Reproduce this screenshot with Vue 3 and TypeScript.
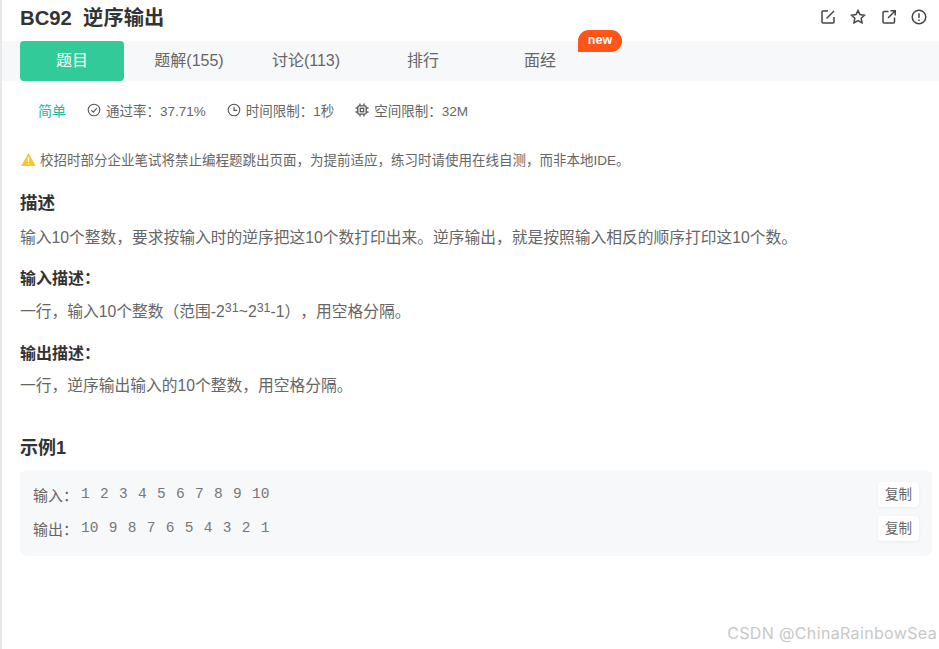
<script setup lang="ts">
const tabs = [
  { label: '题目', active: true },
  { label: '题解(155)', active: false },
  { label: '讨论(113)', active: false },
  { label: '排行', active: false },
  { label: '面经', active: false, badge: 'new' },
]
const samples = [
  { label: '输入\uFF1A', value: '1 2 3 4 5 6 7 8 9 10' },
  { label: '输出\uFF1A', value: '10 9 8 7 6 5 4 3 2 1' },
]
</script>

<template>
  <div class="page">
    <header class="head">
      <h1 class="title">BC92&nbsp;&nbsp;逆序输出</h1>
      <div class="actions">
        <svg viewBox="0 0 16 16" class="act"><path d="M8 2H3a1 1 0 0 0-1 1v10a1 1 0 0 0 1 1h10a1 1 0 0 0 1-1V8" /><path d="M6.500 9.500 14 2" /></svg>
        <svg viewBox="0 0 16 16" class="act"><path d="M8 1.500 9.900 5.600l4.600.6-3.300 3.100.8 4.500L8 11.600l-4 2.200.8-4.500L1.500 6.200l4.600-.6Z" /></svg>
        <svg viewBox="0 0 16 16" class="act"><path d="M7.500 2.500H3a1 1 0 0 0-1 1V13a1 1 0 0 0 1 1h9.500a1 1 0 0 0 1-1V8.500" /><path d="M7 9 14 2M9.500 1.800h4.700v4.700" /></svg>
        <svg viewBox="0 0 16 16" class="act"><circle cx="8" cy="8" r="6.800" /><path d="M8 4.200v4.800M8 10.600v1.300" /></svg>
      </div>
    </header>

    <nav class="tabs">
      <div v-for="t in tabs" :key="t.label" class="tab" :class="{ active: t.active }">
        {{ t.label }}
        <span v-if="t.badge" class="badge">{{ t.badge }}</span>
      </div>
    </nav>

    <div class="meta">
      <span class="level">简单</span>
      <span class="item">
        <svg viewBox="0 0 14 14" class="mi"><circle cx="7" cy="7" r="5.800" /><path d="M4.300 7.200 6.300 9.200 9.900 5.200" /></svg>
        通过率&#xFF1A;37.71%
      </span>
      <span class="item">
        <svg viewBox="0 0 14 14" class="mi"><circle cx="7" cy="7" r="5.800" /><path d="M7 3.800V7.400H10.200" /></svg>
        时间限制&#xFF1A;1秒
      </span>
      <span class="item">
        <svg viewBox="0 0 14 14" class="mi chip"><rect x="2.800" y="2.800" width="8.400" height="8.400" rx="1.500" /><rect x="5.300" y="5.300" width="3.400" height="3.400" /><path d="M5 .5v2.300M9 .5v2.300M5 11.200v2.300M9 11.200v2.300M.5 5h2.300M.5 9h2.300M11.200 5h2.300M11.200 9h2.300" /></svg>
        空间限制&#xFF1A;32M
      </span>
    </div>

    <p class="warn">
      <svg viewBox="0 0 14 14" class="warn-icon"><path d="M7 1 13.800 13H.2Z" fill="#f7c531" /><path d="M7 5v4.300M7 10.300v1.200" stroke="#fff" stroke-width="1.400" /></svg>
      校招时部分企业笔试将禁止编程题跳出页面&#xFF0C;为提前适应&#xFF0C;练习时请使用在线自测&#xFF0C;而非本地IDE。
    </p>

    <h2 class="h-main">描述</h2>
    <p class="body">输入10个整数&#xFF0C;要求按输入时的逆序把这10个数打印出来。逆序输出&#xFF0C;就是按照输入相反的顺序打印这10个数。</p>

    <h3 class="h-sub first">输入描述&#xFF1A;</h3>
    <p class="body">一行&#xFF0C;输入10个整数&#xFF08;范围-2<sup>31</sup>~2<sup>31</sup>-1&#xFF09;&#xFF0C;用空格分隔。</p>

    <h3 class="h-sub second">输出描述&#xFF1A;</h3>
    <p class="body last">一行&#xFF0C;逆序输出输入的10个整数&#xFF0C;用空格分隔。</p>

    <h2 class="h-example">示例1</h2>
    <section class="sample">
      <div v-for="s in samples" :key="s.label" class="row">
        <span class="label">{{ s.label }}</span>
        <code class="value">{{ s.value }}</code>
        <button class="copy">复制</button>
      </div>
    </section>

    <div class="mark">CSDN @ChinaRainbowSea</div>
  </div>
</template>

<style>
html, body { margin: 0; background: #fff; overflow: hidden; }
</style>

<style scoped>
.page {
  position: relative;
  box-sizing: border-box;
  width: 939px;
  height: 649px;
  overflow: hidden;
  border-left: 2px solid #e8e8e8;
  color: #666;
  font-family: "Liberation Sans", "Noto Sans CJK SC", sans-serif;
  font-size: 14px;
}
.head {
  display: flex;
  align-items: center;
  justify-content: space-between;
  height: 41px;
  padding: 0 12px 5px 18px;
  box-sizing: border-box;
}
.title { margin: 0; font-size: 20.300px; line-height: 36px; font-weight: 700; color: #333; }
.actions { display: flex; gap: 14.500px; margin-top: -3px; }
.act { width: 16px; height: 16px; fill: none; stroke: #444; stroke-width: 1.500; }
.tabs {
  display: flex;
  gap: 13px;
  height: 40px;
  padding-left: 18px;
  background: #f7f8fa;
}
.tab {
  position: relative;
  width: 104px;
  line-height: 40px;
  text-align: center;
  border-radius: 4px;
  color: #666;
  font-size: 16px;
}
.tab.active { background: #32ca99; color: #fff; }
.badge {
  position: absolute;
  left: 90px;
  top: -11px;
  width: 44px;
  height: 22px;
  line-height: 20px;
  border-radius: 11px 11px 11px 0;
  background: #fe5518;
  color: #fff;
  font-size: 12.500px;
  font-weight: 700;
}
.meta {
  display: flex;
  align-items: center;
  height: 20px;
  margin-top: 19px;
  padding-left: 36px;
  font-size: 13.500px;
  color: #666;
}
.level { color: #25bb9b; margin-right: 21px; font-size: 14px; }
.item { display: flex; align-items: center; gap: 5px; margin-right: 21px; }
.mi { width: 14px; height: 14px; fill: none; stroke: #555; stroke-width: 1.100; }
.mi.chip { stroke-width: 1.300; }
.warn {
  display: flex;
  align-items: center;
  gap: 4px;
  margin: 29px 0 0 19px;
  height: 20px;
  font-size: 13.500px;
  color: #666;
}
.warn-icon { width: 15px; height: 15px; }
.h-main { margin: 22px 0 0 18px; font-size: 17.500px; line-height: 24px; font-weight: 700; color: #333; }
.body { margin: 11px 0 0 18px; font-size: 15.750px; line-height: 24px; color: #666; text-spacing-trim: space-all; }
.body sup { font-size: 12.500px; line-height: 0; vertical-align: 5px; }
.h-sub { margin: 18px 0 0 18px; font-size: 16px; line-height: 22px; font-weight: 700; color: #333; }
.h-sub.second { margin-top: 19px; }
.h-sub + .body { margin-top: 10px; }
.h-sub + .body.last { margin-top: 9px; }
.h-example { margin: 37px 0 0 18px; font-size: 18px; line-height: 26px; font-weight: 700; color: #333; }
.sample {
  margin: 9px 7px 0 18px;
  padding: 7.500px 13px 10.500px;
  border-radius: 6px;
  background: #f7f8fa;
}
.row { display: flex; align-items: center; height: 34px; }
.label { width: 48px; font-size: 15px; color: #666; }
.value {
  flex: 1;
  font-family: "Liberation Mono", monospace;
  font-size: 14.500px;
  color: #777;
  white-space: pre;
  word-spacing: 1.600px;
  margin-top: -2px;
}
.copy {
  width: 41px;
  height: 25px;
  padding: 0 0 3px;
  border: 0;
  border-radius: 3px;
  background: #fff;
  color: #666;
  font-family: inherit;
  font-size: 13.500px;
  box-shadow: 0 1px 3px rgba(0, 0, 0, .06);
}
.mark {
  position: absolute;
  right: 2px;
  bottom: 6px;
  font-family: Inter, sans-serif;
  font-size: 16px;
  letter-spacing: .35px;
  color: #c8c8c8;
}
</style>
